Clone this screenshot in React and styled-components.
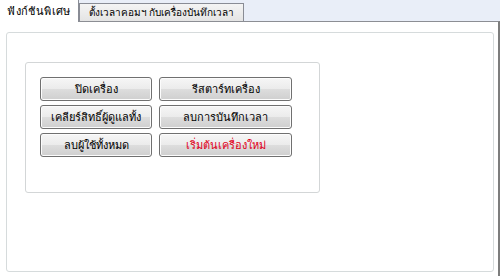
import React from 'react'
import styled, { createGlobalStyle } from 'styled-components'

const Global = createGlobalStyle`
  body {
    margin: 0;
    background: #ffffff;
    font-family: Tahoma, "Noto Sans", "DejaVu Sans", sans-serif;
  }
`

const Page = styled.div`
  width: 500px;
  height: 276px;
  display: flex;
  flex-direction: column;
  background: #ffffff;
  overflow: hidden;
`

const TabStrip = styled.div`
  height: 21px;
  display: flex;
  align-items: flex-end;
  background: #e9eef8;
  position: relative;
  z-index: 1;
`

const Tab = styled.div`
  box-sizing: border-box;
  width: ${p => p.w}px;
  height: ${p => (p.active ? '22px' : '18px')};
  margin-bottom: ${p => (p.active ? '-1px' : '0')};
  display: flex;
  align-items: center;
  justify-content: center;
  font-size: ${p => (p.active ? '11px' : '10px')};
  letter-spacing: ${p => (p.active ? '0.4px' : '0')};
  color: #000;
  background: ${p => (p.active ? '#ffffff' : 'linear-gradient(#f4f4f4, #e4e4e4)')};
  border: 1px solid #898c95;
  border-left: ${p => (p.active ? 'none' : '1px solid #898c95')};
  border-bottom: none;
  border-top: ${p => (p.active ? 'none' : '1px solid #898c95')};
  white-space: nowrap;
  overflow: hidden;
`

const Panel = styled.div`
  flex: 1;
  display: flex;
  box-sizing: border-box;
  border-top: 1px solid #8c8e94;
  border-right: 2px solid #7d7d7d;
  padding: 10px 4px 4px 6px;
`

const Inner = styled.div`
  flex: 1;
  border: 1px solid #d6dbdc;
  border-radius: 3px;
  padding: 29px 18px;
`

const Group = styled.div`
  box-sizing: border-box;
  width: 295px;
  height: 131px;
  border: 1px solid #d3d6d7;
  border-radius: 3px;
  padding: 14px 14px;
`

const ButtonGrid = styled.div`
  display: grid;
  grid-template-columns: 112px 133px;
  grid-auto-rows: 24px;
  column-gap: 7px;
  row-gap: 4px;
`

const Button = styled.button`
  box-sizing: border-box;
  height: 24px;
  padding: 0;
  border: 1px solid #707070;
  border-radius: 3px;
  background: linear-gradient(#f6f6f6 0%, #ebebeb 50%, #dddddd 51%, #cfcfcf 100%);
  box-shadow: inset 0 0 0 1px #fcfcfc;
  font-family: Tahoma, "Noto Sans", "DejaVu Sans", sans-serif;
  font-size: 11px;
  color: ${p => (p.danger ? '#e0001a' : '#000000')};
  white-space: nowrap;
`

function App () {
  return (
    <Page>
      <Global />
      <TabStrip>
        <Tab active w={79}>ฟังก์ชันพิเศษ</Tab>
        <Tab w={165}>ตั้งเวลาคอมฯ กับเครื่องบันทึกเวลา</Tab>
      </TabStrip>
      <Panel>
        <Inner>
          <Group>
            <ButtonGrid>
              <Button>ปิดเครื่อง</Button>
              <Button>รีสตาร์ทเครื่อง</Button>
              <Button>เคลียร์สิทธิ์ผู้ดูแลทั้ง</Button>
              <Button>ลบการบันทึกเวลา</Button>
              <Button>ลบผู้ใช้ทั้งหมด</Button>
              <Button danger>เริ่มต้นเครื่องใหม่</Button>
            </ButtonGrid>
          </Group>
        </Inner>
      </Panel>
    </Page>
  )
}

export default App
